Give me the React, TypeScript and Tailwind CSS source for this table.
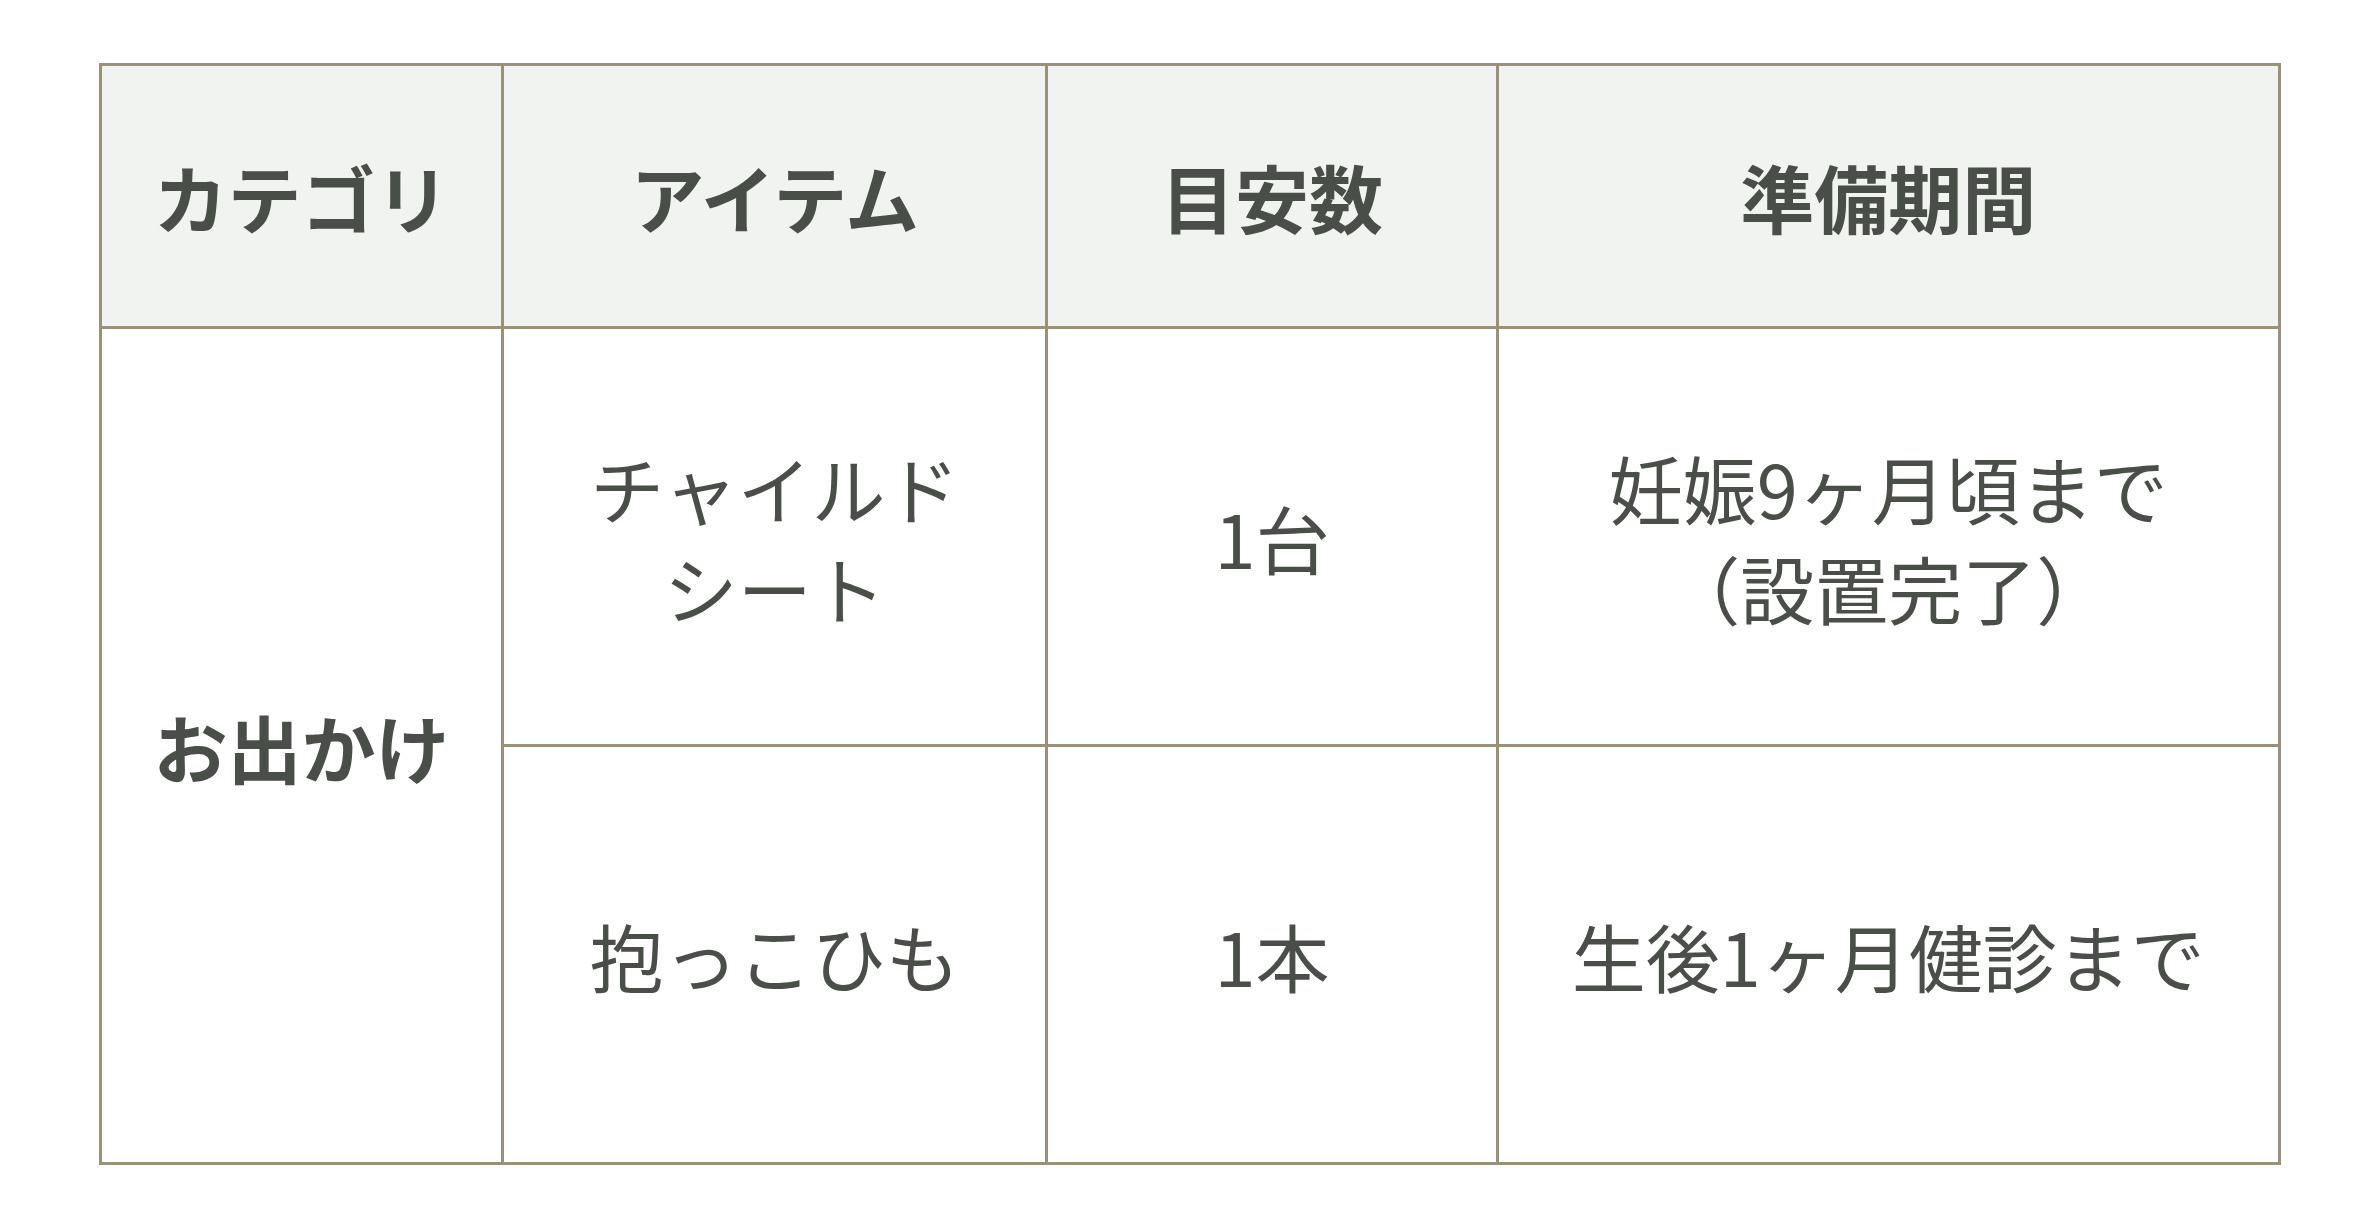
import React from "react";

const rows = [
  { item: ["チャイルド", "シート"], qty: "1台", period: ["妊娠9ヶ月頃まで", "（設置完了）"] },
  { item: ["抱っこひも"], qty: "1本", period: ["生後1ヶ月健診まで"] },
];

const cell = "border-[3px] border-[#9a917b] text-center align-middle";

export default function App() {
  return (
    <div
      className="min-h-[1229px] w-[2380px] bg-white pl-[99px] pt-[63px] text-[#4a4e49]"
      style={{ fontFamily: '"Noto Sans CJK JP", "Noto Sans", sans-serif' }}
    >
      <table className="w-[2182px] table-fixed border-collapse">
        <colgroup>
          <col className="w-[402px]" />
          <col className="w-[544px]" />
          <col className="w-[450px]" />
          <col className="w-[782px]" />
        </colgroup>
        <thead>
          <tr className="h-[263px] bg-[#f0f3ef] text-[74px] font-bold leading-none">
            <th className={cell}>カテゴリ</th>
            <th className={cell}>アイテム</th>
            <th className={cell}>目安数</th>
            <th className={cell}>準備期間</th>
          </tr>
        </thead>
        <tbody className="text-[74px] leading-[100px]">
          {rows.map((r, i) => (
            <tr key={i} className="h-[418px]">
              {i === 0 ? (
                <td rowSpan={2} className={`${cell} font-bold`}>
                  お出かけ
                </td>
              ) : null}
              <td className={cell}>
                {r.item.map((t) => (
                  <div key={t}>{t}</div>
                ))}
              </td>
              <td className={cell}>{r.qty}</td>
              <td className={cell}>
                {r.period.map((t) => (
                  <div key={t}>{t}</div>
                ))}
              </td>
            </tr>
          ))}
        </tbody>
      </table>
    </div>
  );
}
